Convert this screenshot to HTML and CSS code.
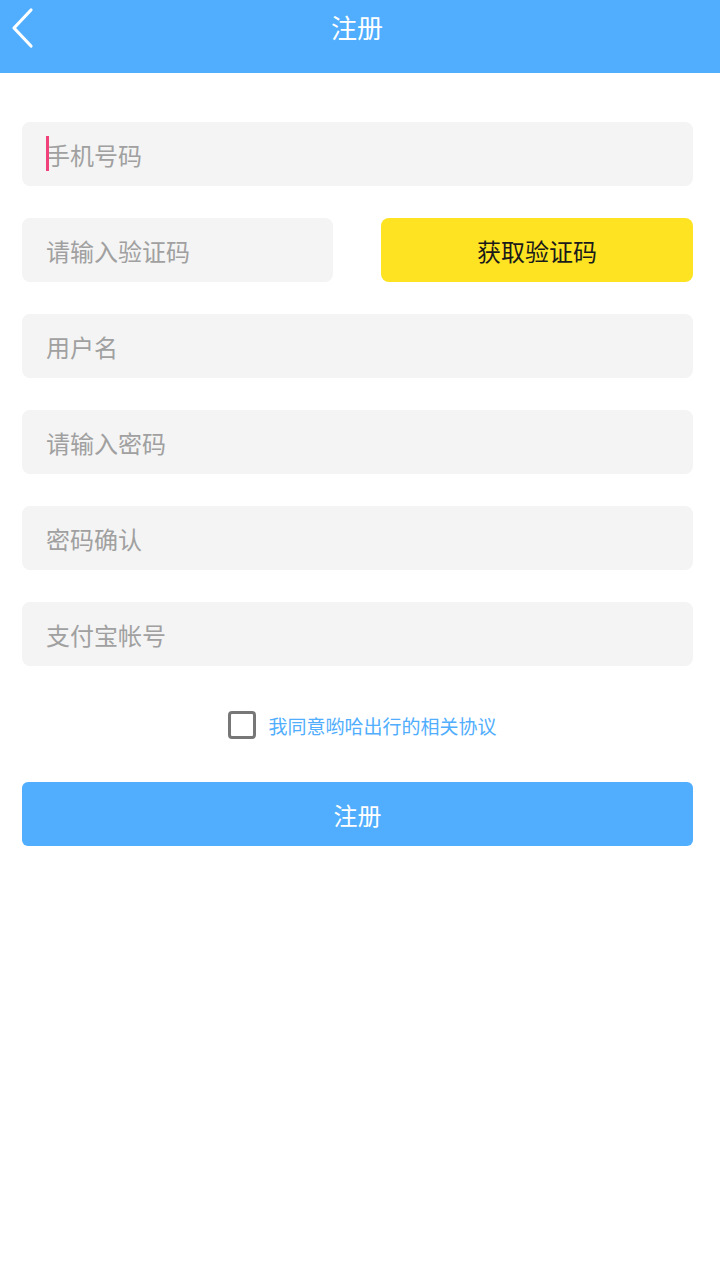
FILE: index.html
```html
<!DOCTYPE html>
<html>
  <head>
    <meta charset="utf-8">
    <title>注册</title>
    <link rel="stylesheet" href="styles.css">
  </head>
  <body>
    <div class="header">
      <span class="back">
        <svg width="24" height="42" viewBox="0 0 24 42"><polyline points="21,3 4,21 21,39" fill="none" stroke="#fff" stroke-width="3.2" stroke-linecap="round" stroke-linejoin="round"/></svg>
      </span>
      <h1>注册</h1>
    </div>

    <div class="form">
      <div class="field"><span class="caret"></span>手机号码</div>
      <div class="row">
        <div class="field code">请输入验证码</div>
        <div class="getcode">获取验证码</div>
      </div>
      <div class="field">用户名</div>
      <div class="field">请输入密码</div>
      <div class="field">密码确认</div>
      <div class="field">支付宝帐号</div>

      <div class="agree">
        <span class="check"></span>
        <span class="agree-text">我同意哟哈出行的相关协议</span>
      </div>

      <div class="submit">注册</div>
    </div>
  </body>
</html>
```
FILE: styles.css
```css
*{
  margin: 0;
  padding: 0;
  box-sizing: border-box;
}
body{
  font-family: "Noto Sans CJK SC", "Noto Sans", sans-serif;
  background: #fff;
  width: 720px;
}
.header{
  position: relative;
  height: 73px;
  background: #51aefe;
  display: flex;
  align-items: center;
  justify-content: center;
}
.back{
  position: absolute;
  left: 10px;
  top: 7px;
}
.header h1{
  font-size: 26px;
  font-weight: normal;
  color: #fff;
  margin-top: -20px;
  margin-left: -6px;
}
.form{
  padding: 49px 27px 0 22px;
  display: flex;
  flex-direction: column;
  gap: 32px;
}
.field{
  position: relative;
  height: 64px;
  background: #f4f4f4;
  border-radius: 8px;
  padding-left: 24px;
  display: flex;
  align-items: center;
  font-size: 24px;
  color: #a0a0a0;
}
.caret{
  position: absolute;
  left: 24px;
  top: 14px;
  width: 3px;
  height: 35px;
  background: #f0417a;
}
.row{
  display: flex;
  gap: 48px;
}
.code{
  width: 311px;
}
.getcode{
  flex: 1;
  height: 64px;
  background: #fde321;
  border-radius: 8px;
  display: flex;
  align-items: center;
  justify-content: center;
  font-size: 24px;
  color: #1a1a1a;
}
.agree{
  display: flex;
  align-items: center;
  justify-content: center;
  gap: 12px;
  margin-top: 12px;
  height: 30px;
  padding-left: 10px;
}
.check{
  width: 28px;
  height: 28px;
  border: 3px solid #777;
  border-radius: 4px;
}
.agree-text{
  font-size: 19px;
  color: #51aefe;
}
.submit{
  margin-top: 10px;
  height: 64px;
  background: #51aefe;
  border-radius: 6px;
  display: flex;
  align-items: center;
  justify-content: center;
  font-size: 24px;
  color: #fff;
}
```
